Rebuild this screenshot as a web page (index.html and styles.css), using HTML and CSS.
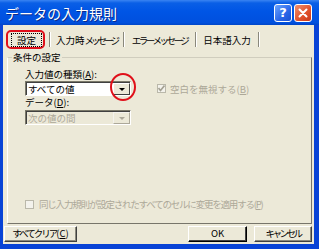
FILE: index.html
```html
<!DOCTYPE html>
<html>
<head>
    <meta charset="UTF-8">
    <title>データの入力規則</title>
    <link rel="stylesheet" href="styles.css">
</head>
<body>
    <div class="window">
        <div class="titlebar">
            <span class="title">データの入力規則</span>
            <span class="cap-btn help">?</span>
            <span class="cap-btn close">
                <svg width="10" height="10" viewBox="0 0 10 10"><path d="M1.5 1.5 L8.5 8.5 M8.5 1.5 L1.5 8.5" stroke="#fff" stroke-width="2" stroke-linecap="round"/></svg>
            </span>
        </div>
        <div class="client">
            <div class="tabs">
                <div class="tab-sel"><span class="focus">設定</span></div>
                <span class="sep"></span>
                <div class="tab tab2">入力時<span class="kana">メッセージ</span></div>
                <span class="sep"></span>
                <div class="tab tab3"><span class="kana">エラー メッセージ</span></div>
                <span class="sep"></span>
                <div class="tab tab4">日本語入力</div>
                <span class="sep"></span>
            </div>

            <fieldset class="group">
                <legend>条件の設定</legend>
                <div class="group-body">
                    <div class="label lbl1">入力値の種類(<u>A</u>):</div>
                    <div class="row">
                        <div class="combo">
                            <span class="combo-text">すべての値</span>
                            <span class="combo-btn"><i class="arrow"></i></span>
                            <span class="mark"></span>
                        </div>
                        <label class="check off">
                            <span class="box">
                                <svg width="7" height="7" viewBox="0 0 7 7"><path d="M0.5 3 L2.5 5.5 L6.5 0.5" fill="none" stroke="#A3A092" stroke-width="1.6"/></svg>
                            </span>
                            空白を無視する(<u>B</u>)
                        </label>
                    </div>
                    <div class="label lbl2">データ(<u>D</u>):</div>
                    <div class="combo disabled">
                        <span class="combo-text">次の値の間</span>
                        <span class="combo-btn"><i class="arrow"></i></span>
                    </div>
                    <label class="check off bottom">
                        <span class="box"></span>
                        <span class="long">同じ入力規則が設定されたすべてのセルに変更を適用する(<u>P</u>)</span>
                    </label>
                </div>
            </fieldset>

            <div class="buttons">
                <div class="btn btn-clear"><span class="tight">すべてクリア</span>(<u>C</u>)</div>
                <div class="fill"></div>
                <div class="btn btn-ok">OK</div>
                <div class="btn btn-cancel"><span class="kana">キャンセル</span></div>
            </div>
        </div>
    </div>
</body>
</html>
```

FILE: styles.css
```css
html, body { margin: 0; padding: 0; }
body { width: 319px; height: 249px; overflow: hidden; font-family: "Noto Sans CJK JP", "Noto Sans", sans-serif; font-size: 9.5px; line-height: 12px; color: #000; }

.window { display: flex; flex-direction: column; height: 249px; background: #0843D6; }

/* タイトルバー */
.titlebar { height: 25px; display: flex; align-items: center; padding: 0 7px 0 5px; background: linear-gradient(#3A84F2 0, #0A5FE6 3px, #0055E5 45%, #0050DE 90%, #0046C8 100%); }
.title { flex: 1; color: #fff; font-size: 14px; line-height: 16px; text-shadow: 1px 1px #0A2A8A; }
.cap-btn { width: 18px; height: 18px; box-sizing: border-box; margin-left: 2px; border: 1px solid #fff; border-radius: 3px; display: flex; align-items: center; justify-content: center; color: #fff; font-family: "DejaVu Sans", sans-serif; font-weight: bold; font-size: 13px; }
.help { background: linear-gradient(135deg, #6BA4FF, #2A66E8 60%, #1B4FD0); }
.close { background: linear-gradient(135deg, #F0906E, #E0502A 60%, #C8381A); }

.client { flex: 1; margin: 0 5px 5px 3px; background: #ECE9D8; display: flex; flex-direction: column; }

.kana { letter-spacing: -2.5px; }
.tab2 .kana { letter-spacing: -3px; }

/* タブ */
.tabs { display: flex; height: 19px; margin: 5px 0 0 3px; }
.tab-sel { width: 39px; box-sizing: border-box; border: 2px solid #E0101A; border-radius: 5px; padding: 1px 1px 0 3px; display: flex; }
.focus { flex: 1; border: 1px dotted #000; text-align: center; line-height: 13px; }
.sep { width: 1px; margin: 2px 0 2px; background: #8A887C; box-shadow: 1px 0 #fff; }
.tabs .sep:first-of-type { margin-left: 4px; }
.tab { text-align: center; padding-top: 4px; line-height: 12px; white-space: nowrap; }
.tab2 { width: 73px; }
.tab3 { width: 71px; }
.tab4 { width: 62px; }

/* グループ */
.group { margin: 2px 2px 0 4px; padding: 0 0 13px 17px; height: 173px; box-sizing: border-box; min-width: 0; border: 1px solid; border-color: #D0CDBE #77756A #77756A #fff; }
.group legend { margin-left: -13px; padding: 0 1px; line-height: 12px; }
.group-body { height: 147px; display: flex; flex-direction: column; }
.label { line-height: 12px; }
.lbl1 { margin-top: 5px; }
.row { display: flex; align-items: center; margin-top: 1px; }
.fill { flex: 1; }

.combo { position: relative; width: 106px; height: 15px; box-sizing: border-box; border: 1px solid; border-color: #7A7869 #fff #fff #7A7869; box-shadow: inset 1px 1px #404040; background: #fff; display: flex; }
.combo-text { flex: 1; padding: 1px 0 0 2px; line-height: 12px; }
.combo-btn { width: 17px; height: 12px; margin: 1px 0 0 0; box-sizing: border-box; border: 1px solid; border-color: #fff #404040 #404040 #fff; background: #ECE9D8; display: flex; align-items: center; justify-content: center; }
.arrow { width: 0; height: 0; border-left: 3px solid transparent; border-right: 3px solid transparent; border-top: 3px solid #000; }
.mark { position: absolute; left: 84px; top: -9px; width: 26px; height: 28px; box-sizing: border-box; border: 2px solid #E0101A; border-radius: 50%; }

.lbl2 { margin-top: 0; }
.combo.disabled { margin-top: 2px; background: #ECE9D8; color: #ACA899; }
.combo.disabled .combo-btn { border-color: #F4F3EE #ACA899 #ACA899 #F4F3EE; }
.combo.disabled .arrow { border-top-color: #ACA899; }

.check { display: flex; align-items: center; white-space: nowrap; }
.check .box { width: 9px; height: 9px; margin-right: 4px; box-sizing: border-box; border: 1px solid #BAB8AA; background: #F3F2EC; display: flex; align-items: center; justify-content: center; }
.check.off { color: #ACA899; }
.row .check { margin-left: 26px; }
.bottom { margin-top: auto; line-height: 12px; }
.bottom .box { margin-right: 5px; }
.long { letter-spacing: -1.2px; }

/* ボタン */
.buttons { display: flex; height: 16px; margin: 2px 2px 2px 1px; }
.btn { box-sizing: border-box; border: 1px solid; border-color: #fff #404040 #404040 #fff; box-shadow: inset -1px -1px #8A887C; background: #ECE9D8; text-align: center; line-height: 13px; white-space: nowrap; }
.btn-clear { width: 73px; }
.tight { letter-spacing: -2px; }
.btn-ok { width: 59px; border-color: #fff #000 #000 #fff; box-shadow: inset -1px -1px #404040; }
.btn-cancel { width: 58px; margin-left: 7px; }
```
